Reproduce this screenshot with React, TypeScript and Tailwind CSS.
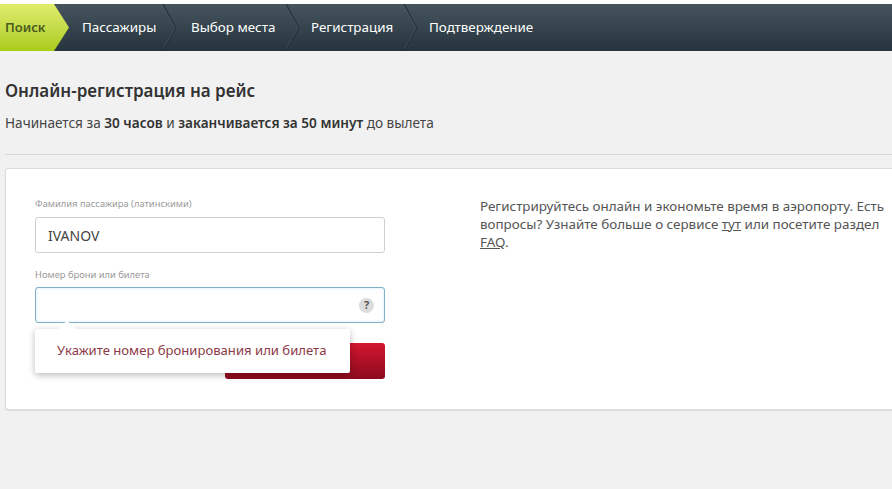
const STEPS = ["Пассажиры", "Выбор места", "Регистрация", "Подтверждение"];

function Chevron() {
  return (
    <svg width="14" height="47" viewBox="0 0 14 47" className="shrink-0" fill="none">
      <path d="M0 0 L13 24 L0 47" stroke="#25323b" strokeWidth="1.2" />
      <path d="M-1 1 L12 24 L-1 46" stroke="#4a5963" strokeWidth="0.6" />
    </svg>
  );
}

export default function App() {
  return (
    <div
      className="w-[892px] h-[489px] overflow-hidden bg-[#f1f1f1] text-[#3a3a3a]"
      style={{ fontFamily: '"Noto Sans", "Open Sans", sans-serif' }}
    >
      <div className="h-1 bg-white" />

      <nav className="h-[47px] flex items-center bg-gradient-to-b from-[#46545e] via-[#36444e] to-[#27343d]">
        <div className="w-[69px] h-full flex items-center pl-[5px] text-[13px] font-semibold text-[#4a5a1e] bg-gradient-to-b from-[#e2ec6c] to-[#a9cc14] [clip-path:polygon(0_0,54px_0,69px_50%,54px_100%,0_100%)]">
          Поиск
        </div>
        <div className="flex items-center h-full text-[13.4px] text-white">
          <span className="pl-[13px] w-[94px] whitespace-nowrap">{STEPS[0]}</span>
          <Chevron />
          <span className="pl-[14px] w-[109px] whitespace-nowrap">{STEPS[1]}</span>
          <Chevron />
          <span className="pl-[11px] w-[104px] whitespace-nowrap">{STEPS[2]}</span>
          <Chevron />
          <span className="pl-[11px] whitespace-nowrap">{STEPS[3]}</span>
        </div>
      </nav>

      <div className="pl-[5px]">
        <h1 className="mt-[29px] text-[17px] leading-[22px] font-semibold text-[#333]">
          Онлайн-регистрация на рейс
        </h1>
        <p className="mt-[11px] text-[13.6px] leading-[20px] text-[#444]">
          Начинается за <b className="font-semibold text-[#333]">30 часов</b> и{" "}
          <b className="font-semibold text-[#333]">заканчивается за 50 минут</b> до вылета
        </p>
        <div className="mt-[21px] h-px bg-[#d6d6d6]" />

        <section className="mt-[13px] h-[242px] flex bg-white border border-r-0 border-[#dcdcdc] rounded-l-[3px] shadow-[0_1px_1px_rgba(0,0,0,0.08)]">
          <form className="ml-[29px] w-[350px] shrink-0 pt-[28px]">
            <label className="block text-[9.35px] leading-[14px] text-[#999]">
              Фамилия пассажира (латинскими)
            </label>
            <div className="mt-[6px] h-9 flex items-center pl-[12px] border border-[#cfcfcf] rounded-[3px] text-[14px] text-[#444]">
              IVANOV
            </div>
            <label className="block mt-[15px] text-[9.35px] leading-[14px] text-[#999]">
              Номер брони или билета
            </label>
            <div className="relative mt-[5px] h-9 flex items-center justify-end pr-[10px] border border-[#7fb0c4] rounded-[3px] shadow-[inset_0_0_3px_rgba(120,190,220,0.35)]">
              <span className="w-[15px] h-[15px] flex items-center justify-center rounded-full bg-[#dcdcdc] text-[11px] font-bold text-[#555]">
                ?
              </span>
              <div className="absolute left-[-1px] top-[41px] w-[315px] h-[44px] z-10 flex items-center pl-[22px] bg-white rounded-[2px] shadow-[0_2px_7px_rgba(0,0,0,0.28)] text-[13.1px] text-[#8c3a48] whitespace-nowrap">
                <span className="absolute left-[26px] top-[-6px] w-3 h-3 rotate-45 bg-white" />
                <span className="relative">Укажите номер бронирования или билета</span>
              </div>
            </div>
            <div className="mt-5 ml-[190px] h-9 rounded-[3px] bg-gradient-to-b from-[#d5162f] to-[#8c0a1d]" />
          </form>

          <p className="ml-[95px] mt-[28px] w-[410px] text-[13.4px] leading-[18px] text-[#555]">
            Регистрируйтесь онлайн и экономьте время в аэропорту. Есть вопросы? Узнайте больше о сервисе{" "}
            <a className="underline">тут</a> или посетите раздел <a className="underline">FAQ</a>.
          </p>
        </section>
      </div>
    </div>
  );
}
